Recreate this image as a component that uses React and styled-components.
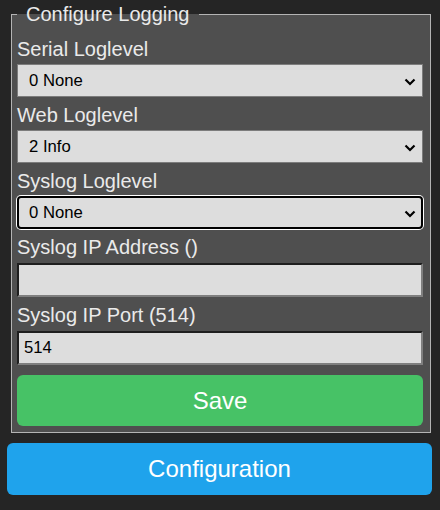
import React from "react";
import styled, { createGlobalStyle } from "styled-components";

const GlobalStyle = createGlobalStyle`
  html, body {
    margin: 0;
    padding: 0;
    background: #252525;
    font-family: "Liberation Sans", Arial, sans-serif;
  }
`;

const levels = ["0 None", "1 Error", "2 Info", "3 Debug", "4 More debug"];

const Chevron = () => (
  <ChevronSvg width="12" height="8" viewBox="0 0 12 8">
    <polyline points="1.5,1.5 6,6 10.5,1.5" fill="none" stroke="#000" strokeWidth="2.2" />
  </ChevronSvg>
);

const SelectField = ({ label, value, focused }) => (
  <Field>
    <Label>{label}</Label>
    <SelectWrap>
      <Select defaultValue={value} $focused={focused}>
        {levels.map((l) => (
          <option key={l}>{l}</option>
        ))}
      </Select>
      <Chevron />
    </SelectWrap>
  </Field>
);

const InputField = ({ label, value }) => (
  <Field>
    <Label>{label}</Label>
    <Input defaultValue={value} />
  </Field>
);

const App = () => (
  <Page>
    <GlobalStyle />
    <Fieldset>
      <Legend>Configure Logging</Legend>
      <Fields>
        <SelectField label="Serial Loglevel" value="0 None" />
        <SelectField label="Web Loglevel" value="2 Info" />
        <SelectField label="Syslog Loglevel" value="0 None" focused />
        <InputField label="Syslog IP Address ()" value="" />
        <InputField label="Syslog IP Port (514)" value="514" />
      </Fields>
      <Button $color="#47c266">Save</Button>
    </Fieldset>
    <Button $color="#1fa3ec" $wide>
      Configuration
    </Button>
  </Page>
);

const Page = styled.div`
  height: 510px;
  box-sizing: border-box;
  padding: 3px 8px 0 7px;
  background: #252525;
`;

const Fieldset = styled.fieldset`
  margin: 0 1px 10px 4px;
  padding: 0 7px 6px 5px;
  border: 1px solid #b4b4b4;
  background: #4f4f4f;
  min-width: 0;
`;

const Legend = styled.legend`
  padding: 0 10px 0 9px;
  font-size: 20px;
  line-height: 23px;
  color: #eaeaea;
`;

const Fields = styled.div`
  display: flex;
  flex-direction: column;
  gap: 7px;
  margin-top: 12px;
`;

const Field = styled.div`
  display: flex;
  flex-direction: column;
`;

const Label = styled.div`
  font-size: 20px;
  line-height: 23px;
  margin-bottom: 3px;
  color: #eaeaea;
`;

const SelectWrap = styled.div`
  position: relative;
`;

const Select = styled.select`
  appearance: none;
  display: block;
  width: 100%;
  height: 33px;
  box-sizing: border-box;
  margin: 0;
  padding: 0 30px 0 11px;
  background: #dddddd;
  color: #000;
  font-family: "Liberation Sans", Arial, sans-serif;
  font-size: 16.7px;
  border: ${(p) => (p.$focused ? "2px solid #000" : "1px solid #7c7c7c")};
  border-radius: ${(p) => (p.$focused ? "4px" : "0")};
  box-shadow: ${(p) => (p.$focused ? "0 0 0 1px #fff" : "none")};
  padding-left: ${(p) => (p.$focused ? "10px" : "11px")};
  outline: none;
`;

const ChevronSvg = styled.svg`
  position: absolute;
  right: 7px;
  top: 50%;
  margin-top: -3px;
  pointer-events: none;
`;

const Input = styled.input`
  display: block;
  width: 100%;
  height: 34px;
  box-sizing: border-box;
  margin: 1px 0 0;
  padding: 0 5px;
  background: #dddddd;
  color: #000;
  font-family: "Liberation Sans", Arial, sans-serif;
  font-size: 16.7px;
  border-style: solid;
  border-width: 2px;
  border-color: #1e1e1e #7f7f7f #7f7f7f #1e1e1e;
  outline: none;
`;

const Button = styled.button`
  display: block;
  width: ${(p) => (p.$wide ? "425px" : "100%")};
  height: ${(p) => (p.$wide ? "52px" : "51px")};
  margin: ${(p) => (p.$wide ? "0" : "10px 0 0")};
  padding: 0;
  border: 0;
  border-radius: 6px;
  background: ${(p) => p.$color};
  color: #fff;
  font-family: "Liberation Sans", Arial, sans-serif;
  font-size: 24px;
  line-height: 1;
  cursor: pointer;
`;

export default App;
